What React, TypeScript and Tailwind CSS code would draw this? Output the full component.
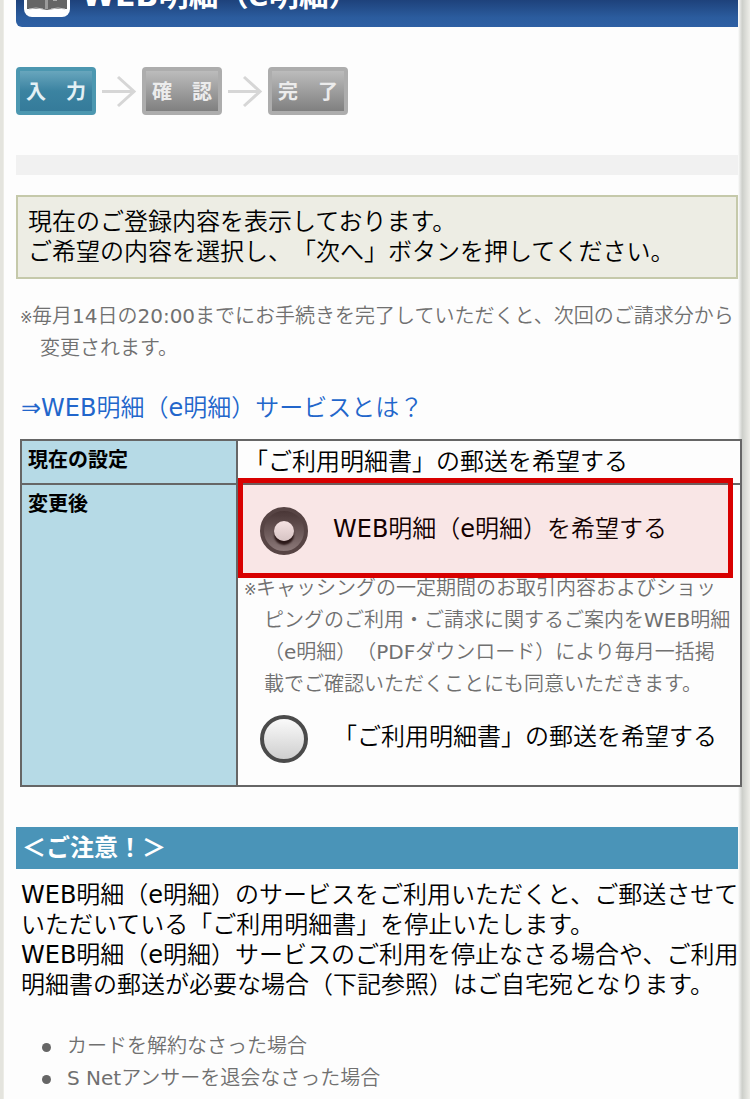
import { useState } from "react";

const STEPS = [
  { label: "入　力", active: true },
  { label: "確　認", active: false },
  { label: "完　了", active: false },
];

const CAUTION_ITEMS = ["カードを解約なさった場合", "S Netアンサーを退会なさった場合"];

function BookIcon() {
  return (
    <svg className="h-12 w-[46px] shrink-0" viewBox="0 0 46 48" aria-hidden="true">
      <rect width="46" height="48" rx="8" fill="#fff" />
      <path d="M3 8h40v32H29l-6 1-6-1H3z" fill="#656565" />
      <path d="M22.5 8v32" stroke="#9a9a9a" strokeWidth="3" />
      <path d="M29 31h4" stroke="#aaa" strokeWidth="2" />
      <path d="M5 40q7-2 14 0M27 40q7-2 14 0" stroke="#c4c4c4" strokeWidth="1" fill="none" />
    </svg>
  );
}

function StepArrow() {
  return (
    <svg className="h-12 w-[46px]" viewBox="0 0 46 48" fill="none" aria-hidden="true">
      <path d="M6 24.5h32M22 10l16 14.5L22 39" stroke="#d6d6d6" strokeWidth="3" />
    </svg>
  );
}

function Steps() {
  return (
    <ol className="mt-10 flex items-center font-['DejaVu_Sans','Noto_Sans_CJK_JP',sans-serif]">
      {STEPS.map((step, i) => (
        <li key={step.label} className="flex items-center">
          {i > 0 && <StepArrow />}
          <span
            className={`flex h-12 w-20 items-center justify-center rounded border-4 pt-0.5 text-xl font-bold whitespace-nowrap ${
              step.active
                ? "border-[#4c97b0] bg-linear-to-b from-[#68a6bd] via-[#3b83a1] to-[#357b9a] text-[#e3f0f5]"
                : "border-[#adadad] bg-linear-to-b from-[#bcbcbc] to-[#808080] text-[#ececec]"
            }`}
          >
            {step.label}
          </span>
        </li>
      ))}
    </ol>
  );
}

function Mark() {
  return <span className="inline-block w-3 indent-0 text-[15px] leading-5">※</span>;
}

type OptionProps = {
  value: string;
  label: string;
  checked: boolean;
  onChange: (value: string) => void;
};

function Option({ value, label, checked, onChange }: OptionProps) {
  return (
    <label className="ml-4 flex items-start gap-[25px]">
      <input
        type="radio"
        name="delivery"
        value={value}
        checked={checked}
        onChange={() => onChange(value)}
        className="grid size-12 shrink-0 appearance-none place-items-center rounded-full border-4 border-[#4b4b4b] bg-linear-to-b from-[#fafafa] to-[#cfcfcf] checked:from-[#3c3c3c] checked:to-[#858585] checked:before:size-5 checked:before:rounded-full checked:before:bg-linear-to-b checked:before:from-[#f8f8f8] checked:before:to-[#d8d8d8] checked:before:shadow-[0_4px_2px_#1c1c1c] checked:before:content-['']"
      />
      <span className="text-2xl leading-[44px] whitespace-nowrap">{label}</span>
    </label>
  );
}

function SettingsTable() {
  const [delivery, setDelivery] = useState("web");

  return (
    <div className="relative mt-4 -mr-1 ml-1">
      <table className="w-full border-collapse bg-[#fdfdfd]">
        <tbody>
          <tr>
            <th className="w-[30%] border-2 border-[#666] bg-[#b6dae6] px-1.5 py-1 text-left align-top font-['DejaVu_Sans','Noto_Sans_CJK_JP',sans-serif] text-xl leading-[30px] font-bold">
              現在の設定
            </th>
            <td className="border-2 border-[#666] p-1.5 text-2xl leading-[30px]">
              「ご利用明細書」の郵送を希望する
            </td>
          </tr>
          <tr>
            <th className="border-2 border-[#666] bg-[#b6dae6] px-1.5 py-1 text-left align-top font-['DejaVu_Sans','Noto_Sans_CJK_JP',sans-serif] text-xl leading-[30px] font-bold">
              変更後
            </th>
            <td className="relative border-2 border-[#666] py-[22px] pl-1.5 align-top">
              <Option
                value="web"
                label="WEB明細（e明細）を希望する"
                checked={delivery === "web"}
                onChange={setDelivery}
              />
              <p className="mt-[17px] mb-[15px] pl-5 -indent-5 text-xl leading-8 whitespace-nowrap text-[#707070]">
                <Mark />
                キャッシングの一定期間のお取引内容およびショッ
                <br />
                ピングのご利用・ご請求に関するご案内をWEB明細
                <br />
                （e明細）（PDFダウンロード）により毎月一括掲
                <br />
                載でご確認いただくことにも同意いただきます。
              </p>
              <Option
                value="post"
                label="「ご利用明細書」の郵送を希望する"
                checked={delivery === "post"}
                onChange={setDelivery}
              />
              {/* Highlight frame over the recommended option */}
              <div className="pointer-events-none absolute -top-[7px] right-[7px] left-0 h-[100px] border-5 border-[#d80000] bg-[#d80000]/9" />
            </td>
          </tr>
        </tbody>
      </table>
    </div>
  );
}

export default function App() {
  return (
    <div
      lang="ja"
      className="flex min-h-screen overflow-hidden bg-[#fdfdfd] font-['DejaVu_Sans','Noto_Sans_CJK_JP_DemiLight','Noto_Sans_CJK_JP',sans-serif] text-black [text-spacing-trim:space-all]"
    >
      <div className="w-1 shrink-0 border-r border-[#ecece6] bg-[#e4e4de]" />
      <main className="z-10 min-w-0 flex-1 pl-3">
        {/* Title bar, scrolled partly out of view */}
        <header className="flex h-[27px] items-end gap-3 overflow-hidden rounded-bl-md bg-linear-to-b from-[#1e427b] via-[#2b5c9e] via-65% to-[#2e60a4] pb-2.5 pl-2">
          <BookIcon />
          <h1 className="font-['DejaVu_Sans','Noto_Sans_CJK_JP',sans-serif] text-3xl leading-[42px] font-bold whitespace-nowrap text-white">
            WEB明細（e明細）
          </h1>
        </header>

        <Steps />
        <div className="mt-10 h-5 bg-[#f1f1f1]" />

        <p className="mt-5 border-2 border-[#c5c9aa] bg-[#edede4] p-2.5 text-2xl leading-[30px]">
          現在のご登録内容を表示しております。
          <br />
          ご希望の内容を選択し、「次へ」ボタンを押してください。
        </p>

        <p className="mt-[21px] ml-1 pl-5 -indent-5 text-xl leading-8 whitespace-nowrap text-[#707070]">
          <Mark />
          毎月14日の20:00までにお手続きを完了していただくと、次回のご請求分から
          <br />
          変更されます。
        </p>

        <p className="mt-[29px] ml-[5px] text-2xl leading-[30px]">
          <a href="#about" className="text-[#2266cb]">
            ⇒WEB明細（e明細）サービスとは？
          </a>
        </p>

        <SettingsTable />

        <h2 className="mt-10 bg-[#4a94b8] pl-1.5 font-['DejaVu_Sans','Noto_Sans_CJK_JP',sans-serif] text-2xl leading-[42px] font-bold text-white">
          ＜ご注意！＞
        </h2>
        <p className="mt-[11px] ml-[5px] text-2xl leading-[30px] whitespace-nowrap">
          WEB明細（e明細）のサービスをご利用いただくと、ご郵送させて
          <br />
          いただいている「ご利用明細書」を停止いたします。
          <br />
          WEB明細（e明細）サービスのご利用を停止なさる場合や、ご利用
          <br />
          明細書の郵送が必要な場合（下記参照）はご自宅宛となります。
        </p>

        <ul className="mt-[30px] ml-[26px] text-xl leading-8 text-[#707070]">
          {CAUTION_ITEMS.map((item) => (
            <li key={item} className="flex items-center gap-4">
              <span className="mt-0.5 size-[9px] rounded-full bg-[#666]" />
              {item}
            </li>
          ))}
        </ul>
      </main>
      <div className="w-3 shrink-0 bg-linear-to-r from-[#fdfdfd] via-[#cdcfca] via-35% to-[#eeeee9]" />
    </div>
  );
}
